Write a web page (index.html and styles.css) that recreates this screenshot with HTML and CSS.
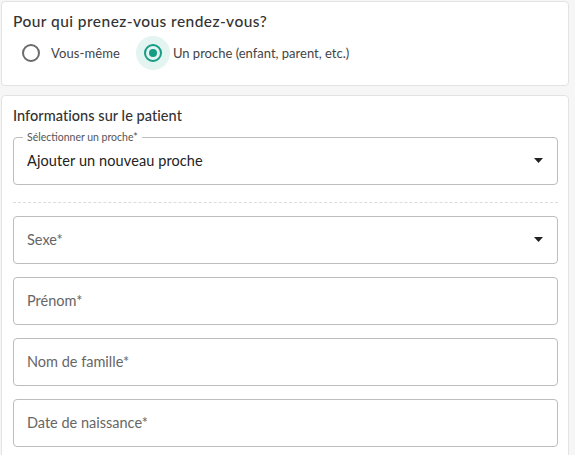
FILE: index.html
```html
<!DOCTYPE html>
<html lang="fr">
<head>
<meta charset="utf-8">
<title>Rendez-vous</title>
<link rel="stylesheet" href="styles.css">
</head>
<body>
<div class="page">
  <section class="card card-who">
    <h2 class="title title-who">Pour qui prenez-vous rendez-vous?</h2>
    <div class="radios">
      <label class="radio radio-self">
        <span class="radio-hit"><span class="radio-ring"></span></span>
        <span class="radio-text">Vous-même</span>
      </label>
      <label class="radio checked">
        <span class="radio-hit"><span class="radio-ring"><span class="radio-dot"></span></span></span>
        <span class="radio-text">Un proche (enfant, parent, etc.)</span>
      </label>
    </div>
  </section>
  <section class="card card-patient">
    <h2 class="title title-patient">Informations sur le patient</h2>
    <div class="field field-filled">
      <span class="legend">Sélectionner un proche*</span>
      <span class="value">Ajouter un nouveau proche</span>
      <svg class="caret" width="9" height="5" viewBox="0 0 9 5"><path d="M0 0h9L4.5 5z" fill="#222"/></svg>
    </div>
    <div class="divider"></div>
    <div class="field">
      <span class="placeholder">Sexe*</span>
      <svg class="caret" width="9" height="5" viewBox="0 0 9 5"><path d="M0 0h9L4.5 5z" fill="#222"/></svg>
    </div>
    <div class="field"><span class="placeholder">Prénom*</span></div>
    <div class="field"><span class="placeholder">Nom de famille*</span></div>
    <div class="field"><span class="placeholder">Date de naissance*</span></div>
  </section>
</div>
</body>
</html>
```

FILE: styles.css
```css
html, body {
  margin: 0;
  padding: 0;
  background: #f6f6f6;
  font-family: Lato, "Open Sans", "Noto Sans", sans-serif;
  color: #333;
}
.page {
  width: 568px;
  padding: 1px 0 0 1px;
  display: flex;
  flex-direction: column;
  gap: 9px;
}
.card {
  background: #fff;
  border: 1px solid #e3e3e3;
  border-radius: 4px;
  padding: 0 10px 0 11px;
}
.card-who {
  box-sizing: border-box;
  height: 85px;
  padding-top: 9px;
}
.title {
  margin: 0;
  font-size: 15px;
  font-weight: 500;
  line-height: 20px;
  color: #333;
}
.title-who {
  font-size: 15.5px;
  letter-spacing: 0.45px;
}
.title-patient {
  font-size: 14.5px;
  letter-spacing: 0.05px;
  margin-bottom: 11px;
}
.radios {
  display: flex;
  align-items: center;
  gap: 16px;
  margin-top: 5px;
  margin-left: 1px;
}
.radio {
  display: flex;
  align-items: center;
  gap: 3px;
  font-size: 13px;
  color: #444;
}
.radio-self .radio-text {
  letter-spacing: 0.1px;
}
.radio-hit {
  width: 34px;
  height: 34px;
  border-radius: 50%;
  display: flex;
  align-items: center;
  justify-content: center;
}
.checked .radio-hit {
  background: #e3f4f1;
}
.radio-ring {
  width: 14px;
  height: 14px;
  border: 2px solid #6b6b6b;
  border-radius: 50%;
  display: flex;
  align-items: center;
  justify-content: center;
}
.checked .radio-ring {
  border-color: #149c84;
}
.radio-dot {
  width: 8px;
  height: 8px;
  border-radius: 50%;
  background: #149c84;
}
.card-patient {
  padding-top: 10px;
  padding-bottom: 12px;
  display: flex;
  flex-direction: column;
}
.field {
  position: relative;
  box-sizing: border-box;
  height: 48px;
  margin: 0 0 13px 0;
  border: 1px solid #bdbdbd;
  border-radius: 4px;
  display: flex;
  align-items: center;
  padding: 0 14px 2px 13px;
  font-size: 14.5px;
}
.field-filled {
  margin: 0;
  padding-top: 1px;
}
.legend {
  position: absolute;
  top: -7px;
  left: 9px;
  background: #fff;
  font-size: 10.5px;
  line-height: 12px;
  color: #555;
  padding: 0 4px;
}
.value {
  flex: 1;
  color: #222;
  font-size: 14.5px;
  letter-spacing: 0.1px;
}
.placeholder {
  flex: 1;
  color: #666;
}
.divider {
  border-top: 1px dashed #dcdcdc;
  margin: 17px 0 13px 0;
}
```
